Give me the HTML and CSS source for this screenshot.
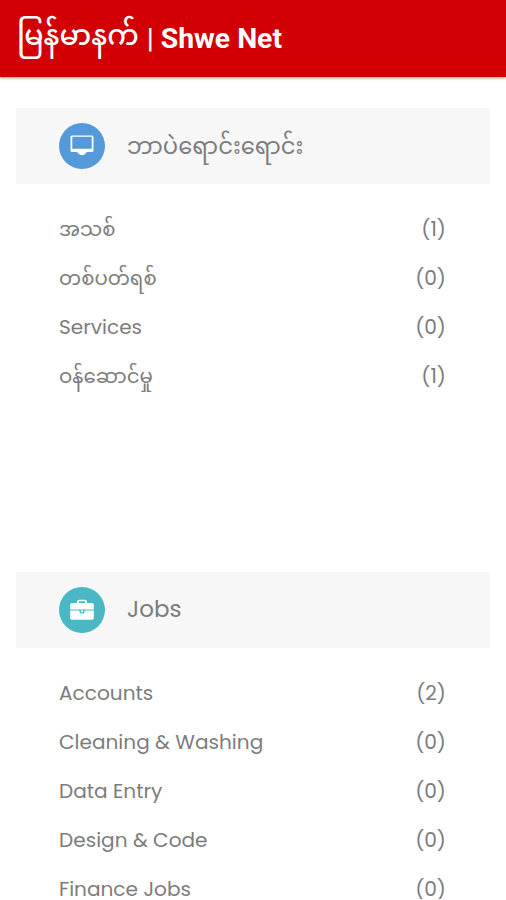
FILE: index.html
```html
<!DOCTYPE html>
<html lang="my">
<head>
<meta charset="utf-8">
<title>မြန်မာနက် | Shwe Net</title>
<link rel="stylesheet" href="styles.css">
</head>
<body>
<header class="appbar"><h1><span class="brand-my">မြန်မာနက်</span><span class="bar">|</span><span>Shwe Net</span></h1></header>
<main>
<section class="category">
<h2><span class="badge blue"><svg viewBox="0 0 24 24"><path fill="#fff" fill-rule="evenodd" d="M2 1.500h20q1.500 0 1.500 1.500V16.500q0 1.500-1.500 1.500h-5.500v1.500h-2V21h-5V19.500h-2V18H2Q.5 18 .5 16.500V3Q.5 1.500 2 1.500zm.3 1.300v12h19.400V2.800z"/></svg></span><span class="my">ဘာပဲရောင်းရောင်း</span></h2>
<ul>
<li><span class="my">အသစ်</span><span>(1)</span></li>
<li><span class="my">တစ်ပတ်ရစ်</span><span>(0)</span></li>
<li><span>Services</span><span>(0)</span></li>
<li><span class="my">ဝန်ဆောင်မှု</span><span>(1)</span></li>
</ul>
</section>
<section class="category">
<h2><span class="badge teal"><svg viewBox="0 0 24 24"><path fill="#fff" fill-rule="evenodd" d="M7 5V3.500Q7 1.700 9 1.700h6q2 0 2 1.800V5h5q1.800 0 1.800 1.800v4.800H.2V6.800Q.2 5 2 5zm1.800 0h6.400V3.300H8.800zM.2 12.400H9.300q0 3.200 2.700 3.200t2.700-3.200h9.100V20q0 1.800-1.800 1.800H2Q.2 21.800.2 20zM11 12.400h2v1.800h-2z"/></svg></span><span>Jobs</span></h2>
<ul>
<li><span>Accounts</span><span>(2)</span></li>
<li><span>Cleaning &amp; Washing</span><span>(0)</span></li>
<li><span>Data Entry</span><span>(0)</span></li>
<li><span>Design &amp; Code</span><span>(0)</span></li>
<li><span>Finance Jobs</span><span>(0)</span></li>
</ul>
</section>
</main>
</body>
</html>
```
FILE: styles.css
```css
* { box-sizing: border-box; }
body {
  margin: 0;
  background: #fff;
  color: #7c7c7c;
  font-family: Poppins, Inter, "Noto Sans Myanmar", "Noto Sans", sans-serif;
}
.appbar {
  height: 77px;
  padding-left: 17px;
  background: #d20004;
  box-shadow: 0 1px 3px rgba(0, 0, 0, .4);
  display: flex;
  align-items: center;
}
.appbar h1 {
  margin: 0;
  color: #fff;
  font: 700 28.3px/40px Roboto, "Noto Sans Myanmar", sans-serif;
  white-space: nowrap;
  display: flex;
}
.brand-my { font-weight: 500; font-size: 28.2px; margin-top: -3px; padding-bottom: 3px; }
.bar { font-weight: 500; margin: 0 7px 0 8px; }
main { padding: 31px 16px 0; }
.category:first-child { height: 464px; }
h2 {
  margin: 0;
  height: 76px;
  padding-left: 43px;
  background: #f7f7f7;
  display: flex;
  align-items: center;
  gap: 22px;
  font-size: 23px;
  line-height: 34px;
  font-weight: 400;
  white-space: nowrap;
}
h2 > span:last-child { margin-top: -2px; }
h2 > .my:last-child { font-size: 22.7px; margin-top: -1px; }
.badge { width: 46px; height: 46px; border-radius: 50%; display: grid; place-items: center; }
.badge svg { width: 24px; height: 24px; }
.blue { background: #5499d9; }
.teal { background: #4bb7c4; }
ul {
  list-style: none;
  margin: 0;
  padding: 35px 44px 0 43px;
  display: grid;
  gap: 29px;
}
li {
  height: 20px;
  display: flex;
  align-items: center;
  justify-content: space-between;
  font-size: 20.1px;
  line-height: 20px;
  white-space: nowrap;
}
li .my { font-size: 19.7px; }
```
